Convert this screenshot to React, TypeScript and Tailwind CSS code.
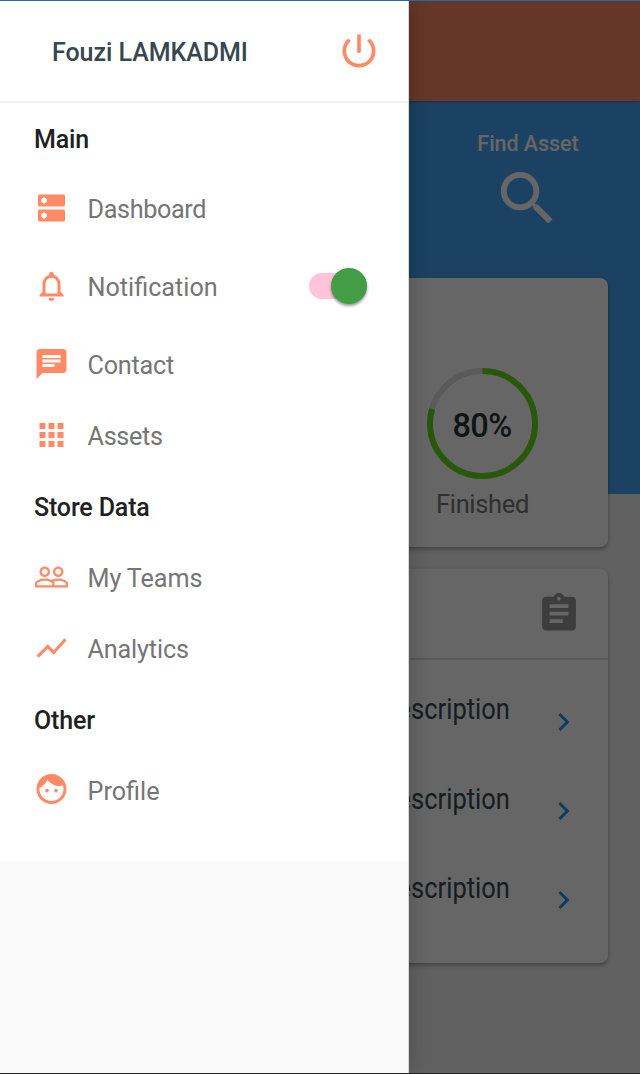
import type { ReactNode } from "react";

const ICONS = {
  dns: "M20 13H4c-.55 0-1 .45-1 1v6c0 .55.45 1 1 1h16c.55 0 1-.45 1-1v-6c0-.55-.45-1-1-1zM7 19c-1.1 0-2-.9-2-2s.9-2 2-2 2 .9 2 2-.9 2-2 2zM20 3H4c-.55 0-1 .45-1 1v6c0 .55.45 1 1 1h16c.55 0 1-.45 1-1V4c0-.55-.45-1-1-1zM7 9c-1.1 0-2-.9-2-2s.9-2 2-2 2 .9 2 2-.9 2-2 2z",
  bell: "M12 22c1.1 0 2-.9 2-2h-4c0 1.1.9 2 2 2zm6-6v-5c0-3.07-1.63-5.64-4.5-6.32V4c0-.83-.67-1.5-1.5-1.5s-1.5.67-1.5 1.5v.68C7.64 5.36 6 7.92 6 11v5l-2 2v1h16v-1l-2-2zm-2 1H8v-6c0-2.48 1.51-4.5 4-4.5s4 2.02 4 4.5v6z",
  chat: "M20 2H4c-1.1 0-1.99.9-1.99 2L2 22l4-4h14c1.1 0 2-.9 2-2V4c0-1.1-.9-2-2-2zM6 9h12v2H6V9zm8 5H6v-2h8v2zm4-6H6V6h12v2z",
  apps: "M4 8h4V4H4v4zm6 12h4v-4h-4v4zm-6 0h4v-4H4v4zm0-6h4v-4H4v4zm6 0h4v-4h-4v4zm6-10v4h4V4h-4zm-6 4h4V4h-4v4zm6 6h4v-4h-4v4zm0 6h4v-4h-4v4z",
  people: "M16.5 13c-1.2 0-3.07.34-4.5 1-1.43-.67-3.3-1-4.5-1C5.33 13 1 14.08 1 16.25V19h22v-2.75c0-2.17-4.33-3.25-6.5-3.25zm-4 4.5h-10v-1.25c0-.54 2.56-1.75 5-1.75s5 1.21 5 1.75v1.25zm9 0H14v-1.25c0-.46-.2-.86-.52-1.22.88-.3 1.96-.53 3.02-.53 2.44 0 5 1.21 5 1.75v1.25zM7.5 12c1.93 0 3.5-1.57 3.5-3.5S9.43 5 7.5 5 4 6.57 4 8.5 5.57 12 7.5 12zm0-5.5c1.1 0 2 .9 2 2s-.9 2-2 2-2-.9-2-2 .9-2 2-2zm9 5.5c1.93 0 3.5-1.57 3.5-3.5S18.43 5 16.5 5 13 6.57 13 8.5s1.57 3.5 3.5 3.5zm0-5.5c1.1 0 2 .9 2 2s-.9 2-2 2-2-.9-2-2 .9-2 2-2z",
  chart: "M3.5 18.49l6-6.01 4 4L22 6.92l-1.41-1.41-7.09 7.97-4-4L2 16.99z",
  face: "M9 11.75c-.69 0-1.25.56-1.25 1.25s.56 1.25 1.25 1.25 1.25-.56 1.25-1.25-.56-1.25-1.25-1.25zm6 0c-.69 0-1.25.56-1.25 1.25s.56 1.25 1.25 1.25 1.25-.56 1.25-1.25-.56-1.25-1.25-1.25zM12 2C6.48 2 2 6.48 2 12s4.48 10 10 10 10-4.48 10-10S17.52 2 12 2zm0 18c-4.41 0-8-3.59-8-8 0-.29.02-.58.05-.86 2.36-1.05 4.23-2.98 5.21-5.37C11.07 8.33 14.05 10 17.42 10c.78 0 1.53-.09 2.25-.26.21.71.33 1.47.33 2.26 0 4.41-3.59 8-8 8z",
  power: "M13 3h-2v10h2V3zm4.83 2.17l-1.42 1.42C17.99 7.86 19 9.81 19 12c0 3.87-3.13 7-7 7s-7-3.13-7-7c0-2.19 1.01-4.14 2.58-5.42L6.17 5.17C4.23 6.82 3 9.26 3 12c0 4.97 4.03 9 9 9s9-4.03 9-9c0-2.74-1.23-5.18-3.17-6.83z",
  search: "M15.5 14h-.79l-.28-.27C15.41 12.59 16 11.11 16 9.5 16 5.91 13.09 3 9.5 3S3 5.91 3 9.5 5.91 16 9.5 16c1.61 0 3.09-.59 4.23-1.57l.27.28v.79l5 4.99L20.49 19l-4.99-5zm-6 0C7.01 14 5 11.99 5 9.5S7.01 5 9.5 5 14 7.01 14 9.5 11.99 14 9.5 14z",
  assignment: "M19 3h-4.18C14.4 1.84 13.3 1 12 1c-1.3 0-2.4.84-2.82 2H5c-1.1 0-2 .9-2 2v14c0 1.1.9 2 2 2h14c1.1 0 2-.9 2-2V5c0-1.1-.9-2-2-2zm-7 0c.55 0 1 .45 1 1s-.45 1-1 1-1-.45-1-1 .45-1 1-1zm2 14H7v-2h7v2zm3-4H7v-2h10v2zm0-4H7V7h10v2z",
  chevron: "M8.59 16.59L13.17 12 8.59 7.41 10 6l6 6-6 6-1.41-1.41z",
};

function Icon({ name, className }: { name: keyof typeof ICONS; className: string }) {
  return (
    <svg viewBox="0 0 24 24" fill="currentColor" className={`block shrink-0 ${className}`}>
      <path d={ICONS[name]} />
    </svg>
  );
}

function Heading({ children }: { children: ReactNode }) {
  return (
    <h2 className="flex h-[70.5px] items-center pt-[2px] pl-[34px] text-[25px] font-medium tracking-[-0.15px] text-[#212121]">
      {children}
    </h2>
  );
}

type ItemProps = {
  icon: keyof typeof ICONS;
  label: string;
  tracking?: string;
  tall?: boolean;
  children?: ReactNode;
};

function Item({ icon, label, tracking = "tracking-[-0.1px]", tall, children }: ItemProps) {
  return (
    <li className={`flex items-center pr-[41px] pl-[33px] ${tall ? "h-[84.4px]" : "h-[71.2px]"}`}>
      <Icon name={icon} className="mb-[2px] size-9 translate-x-[0.5px] text-[#ff8a65]" />
      <span className={`mt-[2px] ml-[18.5px] flex-1 text-[25.2px] text-[#757575] ${tracking}`}>{label}</span>
      {children}
    </li>
  );
}

function Toggle() {
  return (
    <div className="mb-[2px] flex h-[26px] w-[58px] items-center justify-end rounded-full bg-[#ffc4d9]">
      <div className="size-9 shrink-0 rounded-full bg-[#439d46] shadow-[0_2px_3px_rgba(0,0,0,0.4)]" />
    </div>
  );
}

function Drawer() {
  return (
    <aside className="absolute top-px left-0 flex h-[1072px] w-[409px] flex-col border-r border-[#d8d8d8] bg-[#fafafa] shadow-[2px_0_20px_rgba(0,0,0,0.2)]">
      <div className="h-[860px] bg-white">
        <header className="flex h-[102px] items-center justify-between border-b-2 border-[#f0f0f0] pr-[27px] pl-[52px]">
          <span className="mt-[4px] text-[25px] font-medium tracking-[-0.05px] text-[#37474f]">Fouzi LAMKADMI</span>
          <Icon name="power" className="size-11 text-[#ff8a65]" />
        </header>
        <nav>
          <Heading>Main</Heading>
          <ul>
            <Item icon="dns" label="Dashboard" tracking="tracking-[-0.35px]" />
            <Item icon="bell" label="Notification" tracking="tracking-normal" tall>
              <Toggle />
            </Item>
            <Item icon="chat" label="Contact" tracking="tracking-[-0.2px]" />
            <Item icon="apps" label="Assets" tracking="tracking-[-0.3px]" />
          </ul>
          <Heading>Store Data</Heading>
          <ul>
            <Item icon="people" label="My Teams" />
            <Item icon="chart" label="Analytics" tracking="tracking-[-0.15px]" />
          </ul>
          <Heading>Other</Heading>
          <ul>
            <Item icon="face" label="Profile" tracking="tracking-normal" />
          </ul>
        </nav>
      </div>
    </aside>
  );
}

function Page() {
  return (
    <main className="isolate flex h-[1072px] flex-col bg-[#f2f2f2]">
      <div className="z-10 h-[100px] shrink-0 bg-[#ff8a65] shadow-[0_1px_3px_rgba(0,0,0,0.25)]" />
      <section className="h-[393px] shrink-0 bg-[#45a5f5]">
        <div className="ml-auto flex w-[224px] flex-col items-center pt-[28px]">
          <span className="text-[21.5px] leading-[30px] font-medium tracking-[-0.05px] text-white">Find Asset</span>
          <Icon name="search" className="mt-[3.5px] mr-[2px] size-[71px] text-white" />
        </div>
      </section>
      <section className="-mt-[216px] mr-8 ml-8 flex h-[269px] shrink-0 justify-end rounded-lg bg-white shadow-[0_2px_4px_rgba(0,0,0,0.35)]">
        <div className="flex w-[251px] flex-col items-center pt-[90px]">
          <div className="grid size-[111px] place-items-center">
            <svg viewBox="0 0 111 111" className="col-start-1 row-start-1 size-[111px] -rotate-90">
              <circle cx="55.5" cy="55.5" r="52.5" fill="none" stroke="#e0e0e0" strokeWidth="6" />
              <circle cx="55.5" cy="55.5" r="52.5" fill="none" stroke="#64dd17" strokeWidth="6" pathLength="100" strokeDasharray="79.5 100" />
            </svg>
            <span className="col-start-1 row-start-1 pt-[5px] pr-[1px] text-[32.5px] font-medium tracking-[-0.6px] text-[#263238]">80%</span>
          </div>
          <span className="mt-[5px] text-[25.5px] leading-[40px] tracking-[-0.35px] text-[#757575]">Finished</span>
        </div>
      </section>
      <section className="mx-8 mt-[22px] h-[394px] shrink-0 rounded-lg bg-white shadow-[0_2px_4px_rgba(0,0,0,0.35)]">
        <div className="flex h-[91px] items-center justify-end border-b-2 border-[#dcdcdc] pr-[27px]">
          <Icon name="assignment" className="mb-[1px] size-[45px] translate-x-[0.5px] text-[#9a9a9a]" />
        </div>
        <div className="pt-[7px]">
          {["first", "second", "third"].map((id) => (
            <div key={id} className="flex h-[89.4px] items-center justify-end">
              <span className="mb-[6px] origin-right scale-x-[0.85] text-[30px] text-[#37474f]">Description</span>
              <Icon name="chevron" className="mt-[20px] mr-[27px] ml-[35px] size-9 translate-x-[0.5px] text-[#2196f3]" />
            </div>
          ))}
        </div>
      </section>
    </main>
  );
}

export default function App() {
  return (
    <div className="relative h-[1074px] w-[640px] overflow-hidden border-t border-b border-t-[#1e66bf] border-b-[#222222] font-['Roboto',sans-serif]">
      <Page />
      <div className="absolute inset-0 bg-black/60" />
      <div className="absolute inset-x-0 -top-px h-[1074px]">
        <Drawer />
      </div>
    </div>
  );
}
